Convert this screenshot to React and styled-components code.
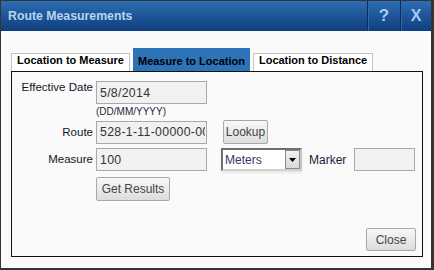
import React from "react";
import styled, { createGlobalStyle } from "styled-components";

const Global = createGlobalStyle`
  html, body { margin: 0; padding: 0; background: #ffffff; }
  body { font-family: "Liberation Sans", Arial, sans-serif; }
  * { box-sizing: border-box; }
`;

const Dialog = styled.div`
  width: 434px;
  height: 270px;
  border: 1px solid #343434;
  border-right-width: 3px;
  border-bottom-width: 2px;
  background: #fafafa;
  display: flex;
  flex-direction: column;
`;

const TitleBar = styled.div`
  height: 30px;
  flex: none;
  display: flex;
  align-items: stretch;
  background: linear-gradient(#2c6db2, #0f3e7e);
`;

const Title = styled.div`
  flex: 1;
  display: flex;
  align-items: center;
  padding-left: 7px;
  padding-bottom: 1px;
  font-size: 12.3px;
  font-weight: bold;
  color: #b6d5f2;
`;

const TitleButton = styled.div`
  width: ${(p) => p.$w}px;
  display: flex;
  align-items: center;
  justify-content: center;
  border-left: 1px solid #0b2c5a;
  box-shadow: inset 1px 0 0 #2f6aa9;
  color: #a6cdf0;
  font-size: ${(p) => p.$size}px;
  font-weight: bold;
  padding-bottom: 1px;
`;

const Body = styled.div`
  flex: 1;
  display: flex;
  flex-direction: column;
  padding: 17px 8px 0 10px;
`;

const Tabs = styled.div`
  display: flex;
  align-items: flex-end;
  gap: 3px;
  height: 23px;
`;

const Tab = styled.div`
  font-size: 11px;
  font-weight: bold;
  line-height: 13px;
  color: #000;
  white-space: nowrap;
  ${(p) =>
    p.$active
      ? `
    background: #2c74b7;
    padding: 7px 5px 3px;
  `
      : `
    background: #ffffff;
    border: 1px solid #c4c4c4;
    border-bottom: none;
    padding: 0 5px 4px;
  `}
`;

const Panel = styled.div`
  height: 186px;
  border: 1px solid #111;
  background: #fafafa;
  display: flex;
  flex-direction: column;
  padding: 9px 6px 5px 8px;
`;

const Row = styled.div`
  display: flex;
  align-items: ${(p) => p.$align || "center"};
  margin-top: ${(p) => p.$mt || 0}px;
`;

const Label = styled.div`
  width: 73px;
  margin-right: 3px;
  text-align: right;
  font-size: 11.5px;
  line-height: 13px;
  color: #141428;
  white-space: nowrap;
`;

const Input = styled.div`
  width: ${(p) => p.$w}px;
  height: 23px;
  margin-left: ${(p) => p.$ml || 0}px;
  border: 1px solid #a9a9a9;
  background: #f1f1f1;
  font-size: 12.3px;
  letter-spacing: 0.3px;
  color: #333;
  padding: 0 1px 0 3px;
  display: flex;
  align-items: center;
`;

const Value = styled.span`
  flex: 1;
  overflow: hidden;
  white-space: nowrap;
`;

const Hint = styled.div`
  margin-left: 76px;
  font-size: 10px;
  line-height: 16px;
  color: #1f1f3a;
`;

const Button = styled.div`
  width: ${(p) => p.$w}px;
  height: ${(p) => p.$h || 24}px;
  margin-left: ${(p) => p.$ml || 0}px;
  border: 1px solid #a8a8a8;
  border-radius: 2px;
  background: linear-gradient(#f8f8f8, #dcdcdc);
  color: #454545;
  font-size: 12px;
  display: flex;
  align-items: center;
  justify-content: center;
`;

const Select = styled.div`
  width: 81px;
  height: 23px;
  margin-left: 14px;
  border: 2px solid #6f6f6f;
  border-right-color: #c8c8c8;
  border-bottom-color: #d0d0d0;
  background: #fff;
  display: flex;
  align-items: center;
  box-shadow: 0 2px 2px rgba(0, 0, 0, 0.08);
`;

const SelectText = styled.div`
  flex: 1;
  padding-left: 2px;
  font-size: 12px;
  color: #36366e;
`;

const SelectArrow = styled.div`
  width: 15px;
  height: 19px;
  border: 1px solid #8a8a8a;
  background: linear-gradient(#f0f0f0, #dadada);
  display: flex;
  align-items: center;
  justify-content: center;
`;

const MarkerLabel = styled.div`
  margin-left: 7px;
  font-size: 12px;
  color: #1a1a3a;
`;

const Spacer = styled.div`
  flex: 1;
`;

const Footer = styled.div`
  display: flex;
  justify-content: flex-end;
`;

export default function App() {
  return (
    <>
      <Global />
      <Dialog>
        <TitleBar>
          <Title>Route Measurements</Title>
          <TitleButton $w={33} $size={17}>?</TitleButton>
          <TitleButton $w={31} $size={16}>X</TitleButton>
        </TitleBar>
        <Body>
          <Tabs>
            <Tab>Location to Measure</Tab>
            <Tab $active>Measure to Location</Tab>
            <Tab>Location to Distance</Tab>
          </Tabs>
          <Panel>
            <Row $align="flex-start">
              <Label>Effective Date</Label>
              <Input $w={111}><Value>5/8/2014</Value></Input>
            </Row>
            <Hint>(DD/MM/YYYY)</Hint>
            <Row>
              <Label>Route</Label>
              <Input $w={111}><Value>528-1-11-00000-00</Value></Input>
              <Button $w={45} $ml={16}>Lookup</Button>
            </Row>
            <Row $mt={4}>
              <Label>Measure</Label>
              <Input $w={111}><Value>100</Value></Input>
              <Select>
                <SelectText>Meters</SelectText>
                <SelectArrow>
                  <svg width="7" height="4" viewBox="0 0 7 4">
                    <path d="M0 0 L7 0 L3.5 4 Z" fill="#000" />
                  </svg>
                </SelectArrow>
              </Select>
              <MarkerLabel>Marker</MarkerLabel>
              <Input $w={61} $ml={8} />
            </Row>
            <Row $mt={6}>
              <Button $w={74} $ml={76}>Get Results</Button>
            </Row>
            <Spacer />
            <Footer>
              <Button $w={50} $h={23}>Close</Button>
            </Footer>
          </Panel>
        </Body>
      </Dialog>
    </>
  );
}
